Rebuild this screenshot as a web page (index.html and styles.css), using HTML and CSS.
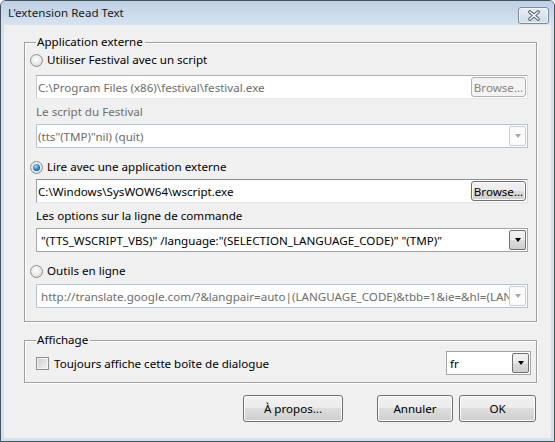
FILE: index.html
```html
<!DOCTYPE html>
<html lang="fr">
<head>
<meta charset="utf-8">
<title>L'extension Read Text</title>
<link rel="stylesheet" href="styles.css">
</head>
<body>
<div class="window">
  <div class="titlebar">
    <span class="title">L'extension Read Text</span>
    <span class="close">
      <svg width="14" height="11" viewBox="0 0 14 11">
        <path d="M3 2 L11 9 M11 2 L3 9" stroke="#56606c" stroke-width="3.6" stroke-linecap="round" fill="none"/>
        <path d="M3 2 L11 9 M11 2 L3 9" stroke="#ffffff" stroke-width="1.6" stroke-linecap="round" fill="none"/>
      </svg>
    </span>
  </div>
  <div class="client">
    <div class="group g1">
      <div class="legend">Application externe</div>
      <div class="radio-row r1"><span class="radio"></span><span>Utiliser Festival avec un script</span></div>
      <div class="textbox disabled tb1"><span class="val">C:\Program Files (x86)\festival\festival.exe</span><span class="btn browse disabled">Browse...</span></div>
      <div class="label disabled l1">Le script du Festival</div>
      <div class="combo disabled c2"><span class="val">(tts"(TMP)"nil) (quit)</span><span class="arrow"></span></div>
      <div class="radio-row r2"><span class="radio checked"></span><span>Lire avec une application externe</span></div>
      <div class="textbox tb2"><span class="val">C:\Windows\SysWOW64\wscript.exe</span><span class="btn browse">Browse...</span></div>
      <div class="label l2">Les options sur la ligne de commande</div>
      <div class="combo c3"><span class="val">"(TTS_WSCRIPT_VBS)" /language:"(SELECTION_LANGUAGE_CODE)" "(TMP)"</span><span class="arrow"></span></div>
      <div class="radio-row r3"><span class="radio"></span><span>Outils en ligne</span></div>
      <div class="combo disabled c4"><span class="val">http://translate.google.com/?&amp;langpair=auto|(LANGUAGE_CODE)&amp;tbb=1&amp;ie=&amp;hl=(LANGUAGE_CODE)</span><span class="arrow"></span></div>
    </div>
    <div class="group g2">
      <div class="legend">Affichage</div>
      <div class="aff-row">
        <div class="check-row"><span class="checkbox"></span><span>Toujours affiche cette boîte de dialogue</span></div>
        <div class="combo lang"><span class="val">fr</span><span class="arrow"></span></div>
      </div>
    </div>
    <div class="buttons">
      <span class="btn big apropos">À propos...</span>
      <span class="btn big annuler">Annuler</span>
      <span class="btn big ok">OK</span>
    </div>
  </div>
</div>
</body>
</html>
```

FILE: styles.css
```css
* { box-sizing: border-box; }
html, body { margin: 0; padding: 0; background: #ffffff; }
body {
  font-family: "Noto Sans", "Open Sans", sans-serif;
  font-size: 11.6px;
  color: #000;
}
.window {
  width: 555px;
  height: 442px;
  border: 1px solid #46535f;
  border-radius: 6px 6px 0 0;
  background: #d4e1ef;
  padding: 0 3px 3px 3px;
  display: flex;
  flex-direction: column;
  overflow: hidden;
}
.titlebar {
  height: 24px;
  flex: none;
  display: flex;
  align-items: center;
  justify-content: space-between;
  background: linear-gradient(#bdd0e5, #d6e3f1);
  margin: 0 -3px;
  padding: 0 4px 0 7px;
}
.title {
  font-size: 11.6px;
  color: #1b1b1b;
  line-height: 16px;
  margin-top: -1px;
}
.close {
  width: 31px;
  height: 17px;
  margin-top: 4px;
  margin-right: 1px;
  border: 1px solid #7d8a98;
  border-radius: 3px;
  background: linear-gradient(#e6eef7, #cfdbe9);
  box-shadow: inset 0 0 0 1px rgba(255,255,255,0.6);
  display: flex;
  align-items: center;
  justify-content: center;
}
.close svg { display: block; }
.client {
  flex: 1;
  background: #f0f0f0;
  display: flex;
  flex-direction: column;
}
.group {
  border: 1px solid #a0a0a0;
  box-shadow: inset 1px 1px 0 #ffffff, 1px 1px 0 #ffffff;
  margin-left: 20px;
  margin-right: 14px;
  display: flex;
  flex-direction: column;
  padding: 0 8px 0 11px;
}
.legend {
  align-self: flex-start;
  height: 16px;
  line-height: 16px;
  margin-top: -9px;
  padding: 0 2px 0 1px;
  background: #f0f0f0;
  color: #000;
}
.g1 { margin-top: 17px; padding-bottom: 13px; }
.g2 { margin-top: 18px; padding-bottom: 7px; padding-right: 5px; }

.radio-row {
  height: 16px;
  display: flex;
  align-items: center;
  margin-left: -6px;
  line-height: 16px;
}
.radio {
  width: 13px;
  height: 13px;
  border-radius: 50%;
  border: 1px solid #8e9090;
  background: radial-gradient(circle at 45% 40%, #ffffff 0, #ececec 45%, #c9c9c9 100%);
  margin-right: 4px;
  position: relative;
  flex: none;
}
.radio.checked::after {
  content: "";
  position: absolute;
  left: 2px; top: 2px;
  width: 7px; height: 7px;
  border-radius: 50%;
  background: radial-gradient(circle at 40% 35%, #9ae4ff 0, #2f8ccd 45%, #0c3f72 100%);
}
.r1 { margin-top: 2px; }
.r2 { margin-top: 11px; }
.r3 { margin-top: 11px; }

.label { height: 16px; line-height: 16px; }
.label.disabled { color: #6d6d6d; }
.l1 { margin-top: 5px; }
.l2 { margin-top: 5px; }

.textbox {
  height: 24px;
  display: flex;
  align-items: center;
  background: #fff;
  border: 1px solid;
  border-color: #8e8f8f #dadde1 #e3e5e8 #a2a4a6;
  padding-left: 1px;
}
.textbox.disabled {
  border-color: #afb1b3 #e0e2e4 #e6e8ea #c6c8ca;
  color: #6d6d6d;
}
.textbox .val {
  flex: 1;
  white-space: nowrap;
  overflow: hidden;
}
.tb1 { margin-top: 7px; }
.tb2 { margin-top: 4px; }

.btn {
  display: flex;
  align-items: center;
  justify-content: center;
  border: 1px solid #707070;
  border-radius: 3px;
  background: linear-gradient(#f2f2f2 0%, #ebebeb 50%, #dddddd 50%, #cfcfcf 100%);
  box-shadow: inset 0 0 0 1px #fbfbfb;
  color: #000;
  white-space: nowrap;
}
.btn.disabled {
  border-color: #adb2b5;
  background: #f4f4f4;
  box-shadow: none;
  color: #838383;
}
.browse {
  width: 55px;
  height: 20px;
  margin-right: 1px;
  flex: none;
}

.combo {
  height: 24px;
  display: flex;
  align-items: stretch;
  background: #fff;
  border: 1px solid #a4a6a8;
  padding: 1px;
}
.combo .val {
  flex: 1;
  display: flex;
  align-items: center;
  white-space: nowrap;
  overflow: hidden;
  padding-left: 3px;
}
.combo .arrow {
  width: 17px;
  flex: none;
  border: 1px solid #707070;
  border-radius: 2px;
  background: linear-gradient(#f2f2f2 0%, #ebebeb 50%, #dddddd 50%, #cfcfcf 100%);
  display: flex;
  align-items: center;
  justify-content: center;
}
.combo .arrow::after {
  content: "";
  width: 0; height: 0;
  border-top: 4px solid #000;
  border-left: 3.5px solid transparent;
  border-right: 3.5px solid transparent;
}
.combo.disabled {
  border-color: #afc3d7;
  color: #6d6d6d;
}
.combo.disabled .arrow {
  border-color: #c9ced3;
  background: #fbfbfb;
}
.combo.disabled .arrow::after { border-top-color: #a5a5a5; }
.c2 { margin-top: 4px; }
.c2 .val { padding-left: 0; }
.c3 { margin-top: 4px; }
.c4 { margin-top: 5px; }

.aff-row {
  display: flex;
  align-items: center;
  justify-content: space-between;
  margin-top: 3px;
}
.check-row {
  display: flex;
  align-items: center;
  height: 16px;
}
.checkbox {
  width: 13px;
  height: 13px;
  border: 1px solid #8e8f8f;
  background: linear-gradient(135deg, #cbcbcb, #f6f6f6);
  box-shadow: inset 0 0 0 1px #f4f4f4;
  margin-right: 5px;
  flex: none;
}
.lang {
  width: 85px;
}
.lang .val { padding-left: 2px; }

.buttons {
  display: flex;
  justify-content: flex-end;
  margin-top: 12px;
  margin-right: 15px;
}
.big { height: 27px; }
.apropos { width: 100px; }
.annuler { width: 76px; margin-left: 34px; }
.ok { width: 77px; margin-left: 6px; }
```
